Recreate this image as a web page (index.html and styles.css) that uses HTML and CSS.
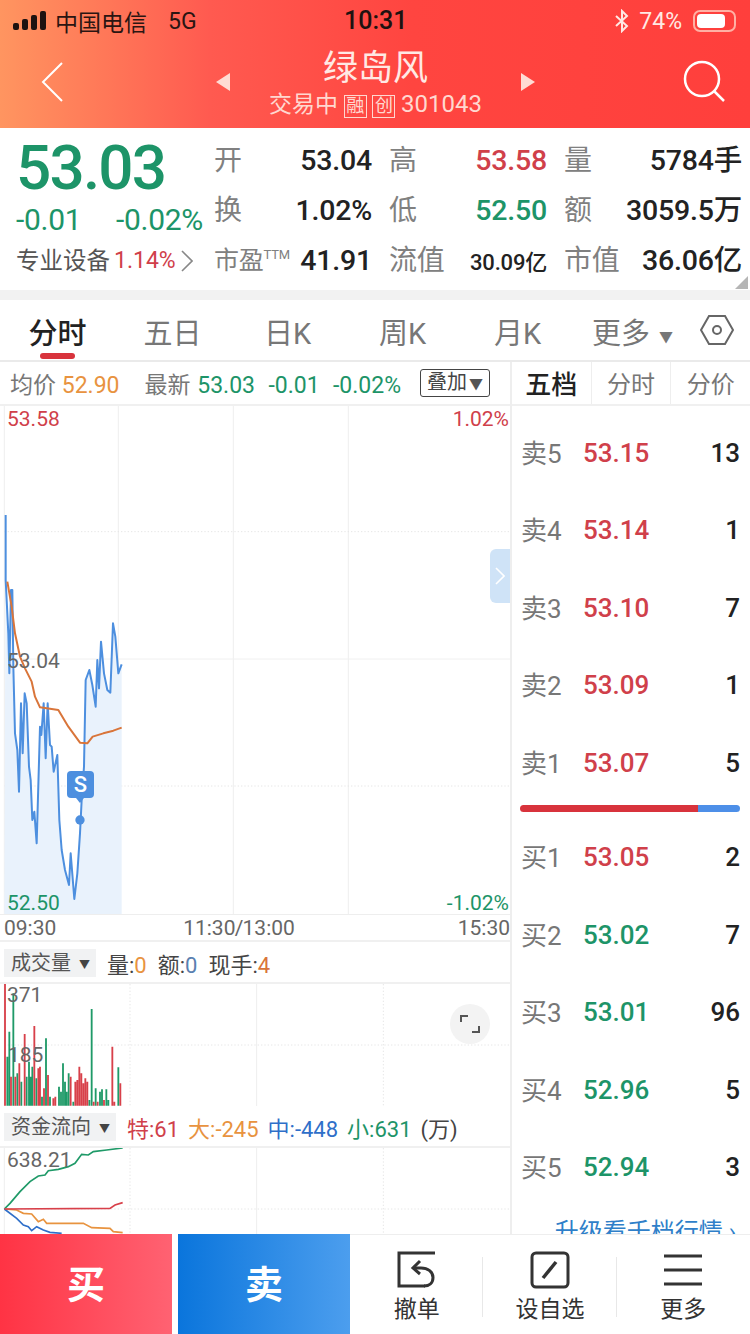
FILE: index.html
```html
<!DOCTYPE html>
<html lang="zh-CN">
<head>
    <meta charset="UTF-8">
    <title>绿岛风 301043</title>
    <link rel="stylesheet" href="styles.css">
</head>
<body>
<div class="screen">
    <!-- Header -->
    <header class="header">
        <div class="status">
            <div class="status-left">
                <svg class="signal" width="34" height="20" viewBox="0 0 34 20"><rect x="0" y="12" width="6" height="7" rx="2"/><rect x="9" y="8" width="6" height="11" rx="2"/><rect x="18" y="4" width="6" height="15" rx="2"/><rect x="27" y="0" width="6" height="19" rx="2"/></svg>
                <span class="carrier">中国电信</span>
                <span class="net">5G</span>
            </div>
            <div class="clock">10:31</div>
            <div class="status-right">
                <svg width="14" height="24" viewBox="0 0 14 24" fill="none" stroke="#ffe9e4" stroke-width="2"><path d="M1 7l11 10-5 5V2l5 5L1 17"/></svg>
                <span>74%</span>
                <span class="battery"><span class="battery-fill"></span></span>
            </div>
        </div>
        <div class="nav">
            <svg width="22" height="40" viewBox="0 0 22 40" fill="none" stroke="#fff" stroke-width="2"><path d="M21 1L2 20l19 19"/></svg>
            <div class="nav-title">
                <span class="arrow arrow-left"></span>
                <div class="name-box">
                    <div class="name">绿岛风</div>
                    <div class="sub">交易中 <span class="tag">融</span> <span class="tag">创</span> <span class="code">301043</span></div>
                </div>
                <span class="arrow arrow-right"></span>
            </div>
            <svg width="44" height="44" viewBox="0 0 44 44" fill="none" stroke="#fff" stroke-width="2.5"><circle cx="20" cy="19" r="17"/><path d="M32 31l10 10"/></svg>
        </div>
    </header>

    <!-- Quote -->
    <section class="quote">
        <div class="quote-left">
            <div class="price">53.03</div>
            <div class="change"><span>-0.01</span><span>-0.02%</span></div>
            <div class="device">专业设备<span class="device-val">1.14%</span>
                <svg width="12" height="22" viewBox="0 0 12 22" fill="none" stroke="#888" stroke-width="1.6"><path d="M1 1l10 10L1 21"/></svg>
            </div>
        </div>
        <div class="stats">
            <div class="stat"><span class="lbl">开</span><span>53.04</span></div>
            <div class="stat"><span class="lbl">高</span><span class="red">53.58</span></div>
            <div class="stat"><span class="lbl">量</span><span class="val-unit">5784手</span></div>
            <div class="stat"><span class="lbl">换</span><span>1.02%</span></div>
            <div class="stat"><span class="lbl">低</span><span class="green">52.50</span></div>
            <div class="stat"><span class="lbl">额</span><span class="val-unit">3059.5万</span></div>
            <div class="stat"><span class="lbl lbl-sm">市盈<sup>TTM</sup></span><span>41.91</span></div>
            <div class="stat"><span class="lbl">流值</span><span class="val-sm">30.09亿</span></div>
            <div class="stat"><span class="lbl">市值</span><span class="val-unit">36.06亿</span></div>
        </div>
        <div class="corner"></div>
    </section>

    <!-- Period tabs -->
    <div class="tabs">
        <div class="tab active">分时</div>
        <div class="tab">五日</div>
        <div class="tab">日K</div>
        <div class="tab">周K</div>
        <div class="tab">月K</div>
        <div class="tab">更多 <span class="tab-caret">▼</span></div>
        <svg class="tab-icon" width="34" height="32" viewBox="0 0 34 32" fill="none" stroke="#666" stroke-width="2"><path d="M9 2h16l8 14-8 14H9L1 16z"/><circle cx="17" cy="16" r="4"/></svg>
    </div>

    <main class="main">
        <div class="charts">
            <div class="infobar">
                <span class="gray">均价 <span class="orange">52.90</span></span>
                <span class="gray latest">最新 <span class="green">53.03&nbsp; -0.01&nbsp; -0.02%</span></span>
                <span class="overlay-btn">叠加<span class="overlay-caret">▼</span></span>
            </div>

            <!-- Price chart -->
            <div class="price-chart">
                <svg width="510" height="508" viewBox="0 -282 1530 1524" fill="none">
                    <path d="M13 -282V1242M700 -282V1242" stroke="#eee" stroke-width="3"/>
                    <path d="M355 -282V1242M1045 -282V1242" stroke="#eee" stroke-width="3"/>
                    <path d="M13 95H1530M13 858H1530" stroke="#e6e6e6" stroke-width="3" stroke-dasharray="4 6"/>
                    <path d="M13 477H1530" stroke="#f0f0f0" stroke-width="3"/>
                    <polygon fill="#e9f2fc" points="13,1242 17,45 17,240 25,400 28,520 33,270 37,270 40,500 45,700 52,750 57,875 63,610 68,760 74,580 80,610 87,800 92,840 97,960 103,935 110,1030 120,680 124,705 131,610 137,775 143,610 150,735 155,740 161,815 172,765 178,960 185,1050 195,1110 207,1155 212,1060 223,1197 232,1120 240,1000 245,900 252,800 257,540 268,510 277,555 287,620 292,480 297,565 303,425 312,520 322,570 331,578 339,370 346,410 355,520 365,493 365,1242"/>
                    <polyline stroke="#4d8fdf" stroke-width="6" stroke-linejoin="round" points="17,45 17,240 25,400 28,520 33,270 37,270 40,500 45,700 52,750 57,875 63,610 68,760 74,580 80,610 87,800 92,840 97,960 103,935 110,1030 120,680 124,705 131,610 137,775 143,610 150,735 155,740 161,815 172,765 178,960 185,1050 195,1110 207,1155 212,1060 223,1197 232,1120 240,1000 245,900 252,800 257,540 268,510 277,555 287,620 292,480 297,565 303,425 312,520 322,570 331,578 339,370 346,410 355,520 365,493"/>
                    <polyline stroke="#d9753a" stroke-width="6" stroke-linejoin="round" points="22,245 35,320 45,400 60,470 75,505 95,545 105,590 120,622 140,625 175,630 205,680 240,728 262,730 278,710 310,700 340,692 365,683"/>
                    <circle cx="240" cy="960" r="14" fill="#4d8fdf"/>
                </svg>
                <span class="axis-label tl">53.58</span>
                <span class="axis-label tr">1.02%</span>
                <span class="axis-label ml">53.04</span>
                <span class="axis-label bl">52.50</span>
                <span class="axis-label br">-1.02%</span>
                <span class="marker">S</span>
                <span class="side-tab">
                    <svg width="10" height="18" viewBox="0 0 10 18" fill="none" stroke="#fff" stroke-width="1.6"><path d="M1 1l8 8-8 8"/></svg>
                </span>
            </div>
            <div class="timeaxis"><span>09:30</span><span class="time-mid">11:30 / 13:00</span><span>15:30</span></div>

            <!-- Volume -->
            <div class="subhead">
                <span class="picker">成交量<span class="picker-caret">▼</span></span>
                <span class="gray-dark">量:<span class="orange">0</span></span>
                <span class="gray-dark">额:<span class="blue-gray">0</span></span>
                <span class="gray-dark">现手:<span class="orange-dark">4</span></span>
            </div>
            <div class="vol-chart">
                <svg width="510" height="122" viewBox="0 222 1530 366" fill="none">
                    <path d="M390 222V588M1150 222V588M13 405H1530" stroke="#e6e6e6" stroke-width="3" stroke-dasharray="4 6"/>
                    <path d="M770 222V588M13 222V588" stroke="#eee" stroke-width="3"/>
                    <path stroke="#1f9a68" stroke-width="5.5" d="M22 587V440M28 587V365M40 587V250M52 587V490M64 587V515M80 587V500M87 587V455M92 587V500M97 587V470M109 587V505M126 587V560M138 587V385M150 587V560M177 587V530M183 587V545M189 587V460M195 587V515M200 587V545M206 587V490M220 587V575M268 587V570M275 587V297M287 587V535M300 587V545M306 587V538M319 587V538M325 587V570M355 587V472"/>
                    <path stroke="#d8404a" stroke-width="5.5" d="M15 587V222M33 587V500M46 587V500M58 587V460M74 587V372M103 587V348M115 587V475M120 587V470M132 587V535M144 587V495M160 587V565M166 587V560M212 587V500M226 587V515M232 587V510M238 587V470M244 587V490M250 587V520M256 587V505M262 587V515M281 587V575M293 587V575M312 587V570M337 587V410M343 587V575M361 587V520"/>
                </svg>
                <span class="axis-label vol-top">371</span>
                <span class="axis-label vol-mid">185</span>
                <span class="expand">
                    <svg width="20" height="20" viewBox="0 0 20 20" fill="none" stroke="#555" stroke-width="2"><path d="M1 8V2h7M19 12v6h-7"/></svg>
                </span>
            </div>

            <!-- Capital flow -->
            <div class="subhead subhead-flow">
                <span class="picker picker-wide">资金流向<span class="picker-caret">▼</span></span>
                <span class="red">特:61</span>
                <span class="orange">大:-245</span>
                <span class="blue">中:-448</span>
                <span class="green">小:631</span>
                <span class="gray-dark">(万)</span>
            </div>
            <div class="flow-chart">
                <svg width="510" height="86" viewBox="0 714 1530 258" fill="none">
                    <path d="M390 714V972M1150 714V972M13 897H1530" stroke="#e6e6e6" stroke-width="3" stroke-dasharray="4 6"/>
                    <path d="M770 714V972M13 714V972" stroke="#eee" stroke-width="3"/>
                    <polyline stroke="#1f9a68" stroke-width="5" points="13,897 30,880 60,845 90,815 115,798 135,795 145,782 175,778 205,770 225,760 245,733 265,735 280,725 320,720 368,714"/>
                    <polyline stroke="#e8933f" stroke-width="5" points="13,897 50,900 70,910 95,912 115,935 130,928 140,940 250,940 275,953 330,955 340,965 368,968"/>
                    <polyline stroke="#2f6fc9" stroke-width="5" points="13,897 50,925 70,945 85,950 95,962 110,950 130,960 150,967 185,970"/>
                    <polyline stroke="#d8404a" stroke-width="5" points="13,897 330,895 345,885 368,878"/>
                </svg>
                <span class="axis-label flow-top">638.21</span>
            </div>
        </div>

        <!-- Order book -->
        <aside class="book">
            <div class="book-tabs">
                <div class="book-tab active">五档</div>
                <div class="book-tab">分时</div>
                <div class="book-tab">分价</div>
            </div>
            <div class="book-rows">
                <div class="row"><span class="row-lbl">卖5</span><span class="row-price red">53.15</span><span class="row-qty">13</span></div>
                <div class="row"><span class="row-lbl">卖4</span><span class="row-price red">53.14</span><span class="row-qty">1</span></div>
                <div class="row"><span class="row-lbl">卖3</span><span class="row-price red">53.10</span><span class="row-qty">7</span></div>
                <div class="row"><span class="row-lbl">卖2</span><span class="row-price red">53.09</span><span class="row-qty">1</span></div>
                <div class="row"><span class="row-lbl">卖1</span><span class="row-price red">53.07</span><span class="row-qty">5</span></div>
            </div>
            <div class="ratio"><div class="ratio-red"></div><div class="ratio-blue"></div></div>
            <div class="book-rows">
                <div class="row"><span class="row-lbl">买1</span><span class="row-price red">53.05</span><span class="row-qty">2</span></div>
                <div class="row"><span class="row-lbl">买2</span><span class="row-price green">53.02</span><span class="row-qty">7</span></div>
                <div class="row"><span class="row-lbl">买3</span><span class="row-price green">53.01</span><span class="row-qty">96</span></div>
                <div class="row"><span class="row-lbl">买4</span><span class="row-price green">52.96</span><span class="row-qty">5</span></div>
                <div class="row"><span class="row-lbl">买5</span><span class="row-price green">52.94</span><span class="row-qty">3</span></div>
            </div>
            <div class="upgrade">升级看千档行情 ›</div>
        </aside>
    </main>

    <!-- Bottom bar -->
    <footer class="footer">
        <div class="btn btn-buy">买</div>
        <div class="btn btn-sell">卖</div>
        <div class="actions">
            <div class="action">
                <svg width="40" height="38" viewBox="0 0 40 38" fill="none" stroke="#333" stroke-width="3"><path d="M38 2H2v33h26"/><path d="M18 17h6c7 0 12 4 12 9.5S32 35 27 35"/><path d="M23 10l-7 7 7 6"/></svg>
                <span>撤单</span>
            </div>
            <div class="action">
                <svg width="40" height="38" viewBox="0 0 40 38" fill="none" stroke="#333" stroke-width="3"><rect x="2" y="2" width="36" height="34" rx="4"/><path d="M13 27l13-16" stroke-width="3.5"/></svg>
                <span>设自选</span>
            </div>
            <div class="action">
                <svg width="40" height="38" viewBox="0 0 40 38" fill="none" stroke="#333" stroke-width="3"><path d="M1 5h38M1 19h38M1 33h38"/></svg>
                <span>更多</span>
            </div>
        </div>
    </footer>
</div>
</body>
</html>
```

FILE: styles.css
```css
/* Base */
* {
    margin: 0;
    padding: 0;
    box-sizing: border-box;
}

body {
    background-color: #fff;
    color: #222;
    font-family: Roboto, "Noto Sans CJK SC", sans-serif;
}

.screen {
    width: 750px;
    height: 1334px;
    display: flex;
    flex-direction: column;
    overflow: hidden;
}

.red { color: #d0404a; }
.green { color: #1d9468; }
.orange { color: #e8933f; }
.orange-dark { color: #d9753a; }
.blue { color: #2f6fc9; }
.blue-gray { color: #5a80b0; }
.gray { color: #777; }
.gray-dark { color: #444; }

/* Header */
.header {
    height: 128px;
    flex-shrink: 0;
    background: linear-gradient(90deg, #ff9560 0%, #ff5a50 28%, #ff4540 55%, #ff3f3c 100%);
}

.status {
    height: 42px;
    display: flex;
    align-items: center;
    justify-content: space-between;
    padding: 0 14px 0 13px;
    position: relative;
}

.status-left {
    display: flex;
    align-items: center;
    color: #2a1512;
    font-size: 23px;
}

.signal {
    fill: #1e1210;
    margin-right: 8px;
}

.net {
    margin-left: 21px;
    font-size: 23px;
}

.clock {
    position: absolute;
    left: 344px;
    top: 6px;
    font-size: 25px;
    font-weight: 500;
    color: #1e1210;
}

.status-right {
    display: flex;
    align-items: center;
    gap: 10px;
    color: #ffe9e4;
    font-size: 23px;
}

.battery {
    width: 43px;
    height: 22px;
    border: 2px solid #ffb0a4;
    border-radius: 7px;
    padding: 2px;
    margin-left: 1px;
}

.battery-fill {
    display: block;
    width: 28px;
    height: 14px;
    background-color: #fff;
    border-radius: 4px;
}

.nav {
    height: 86px;
    display: flex;
    align-items: center;
    justify-content: space-between;
    padding: 0 24px 6px 41px;
}

.nav-title {
    display: flex;
    align-items: center;
    gap: 30px;
    color: #fff;
    margin-left: 6px;
}

.arrow {
    width: 0;
    height: 0;
    border-top: 9px solid transparent;
    border-bottom: 9px solid transparent;
}

.arrow-left { border-right: 14px solid #ffdcd4; }
.arrow-right { border-left: 14px solid #ffdcd4; }

.name-box {
    width: 231px;
    text-align: center;
}

.name {
    font-size: 35px;
    line-height: 44px;
    color: #ffe9e4;
}

.sub {
    font-size: 23px;
    line-height: 26px;
    color: #ffd8d0;
    white-space: nowrap;
}

.tag {
    display: inline-block;
    width: 23px;
    height: 23px;
    font-size: 18px;
    line-height: 20px;
    border: 1px solid #ffd8d0;
    text-align: center;
}

.code {
    font-size: 24px;
}

/* Quote */
.quote {
    height: 162px;
    flex-shrink: 0;
    display: flex;
    padding: 7px 8px 0 0;
    position: relative;
}

.quote-left {
    width: 215px;
    padding-left: 16px;
    flex-shrink: 0;
}

.price {
    font-size: 62px;
    line-height: 66px;
    letter-spacing: -1.8px;
    font-weight: 500;
    color: #1d9468;
}

.change {
    display: flex;
    justify-content: space-between;
    font-size: 30px;
    line-height: 34px;
    margin-top: 2px;
    padding-right: 12px;
    letter-spacing: -0.3px;
    color: #1d9468;
}

.device {
    display: flex;
    align-items: center;
    font-size: 23.5px;
    line-height: 40px;
    margin-top: 4px;
    color: #555;
    white-space: nowrap;
}

.device-val {
    font-size: 23px;
    color: #d0404a;
    margin: 0 5px 0 4px;
}

.stats {
    flex: 1;
    display: grid;
    grid-template-columns: 157px 157px 177px;
    grid-auto-rows: 50px;
    column-gap: 18px;
}

.stat {
    display: flex;
    align-items: center;
    justify-content: space-between;
    font-size: 28.5px;
    font-weight: 500;
    color: #222;
    white-space: nowrap;
    letter-spacing: -0.2px;
}

.lbl {
    font-size: 28px;
    font-weight: 400;
    color: #808080;
    margin: -4px 0 0 -1px;
}

.lbl-sm {
    font-size: 25px;
}

.lbl sup {
    font-size: 13px;
    vertical-align: 10px;
    line-height: 0;
}

.val-sm {
    font-size: 22px;
}

.val-unit {
    margin-top: -5px;
}

.corner {
    position: absolute;
    right: 2px;
    bottom: 1px;
    width: 0;
    height: 0;
    border-left: 13px solid transparent;
    border-bottom: 13px solid #b5b5b5;
}

/* Tabs */
.tabs {
    height: 72px;
    flex-shrink: 0;
    display: flex;
    align-items: center;
    border-top: 10px solid #f2f2f2;
    border-bottom: 2px solid #eaeaea;
    color: #777;
    font-size: 29px;
}

.tab {
    width: 115px;
    height: 60px;
    padding-top: 4px;
    line-height: 60px;
    text-align: center;
    position: relative;
    white-space: nowrap;
}

.tab.active {
    color: #222;
    font-weight: 500;
}

.tab.active::after {
    content: '';
    position: absolute;
    left: 40px;
    bottom: 1px;
    width: 35px;
    height: 6px;
    border-radius: 3px;
    background-color: #d8333c;
}

.tab-caret {
    font-size: 14px;
    vertical-align: 2px;
    margin-left: 2px;
}

.tab-icon {
    margin-left: 10px;
}

/* Main area */
.main {
    flex: 1;
    min-height: 0;
    display: flex;
    overflow: hidden;
}

.charts {
    width: 510px;
    flex-shrink: 0;
}

.infobar {
    height: 44px;
    display: flex;
    align-items: center;
    padding: 0 20px 0 10px;
    border-bottom: 2px solid #f0f0f0;
    font-size: 23px;
    white-space: nowrap;
}

.latest {
    margin-left: 25px;
    word-spacing: 1px;
}

.overlay-btn {
    margin-left: auto;
    width: 70px;
    height: 28px;
    line-height: 25px;
    border: 1.5px solid #444;
    border-radius: 3px;
    font-size: 20px;
    color: #444;
    text-align: center;
}

.overlay-caret {
    font-size: 14px;
    margin-left: 2px;
    color: #555;
}

.price-chart {
    height: 508px;
    position: relative;
}

.price-chart svg,
.vol-chart svg,
.flow-chart svg {
    display: block;
}

.axis-label {
    position: absolute;
    font-size: 21px;
    line-height: 24px;
    color: #666;
}

.axis-label.tl { left: 7px; top: 1px; color: #d0404a; }
.axis-label.tr { right: 1px; top: 1px; color: #d0404a; }
.axis-label.ml { left: 7px; top: 243px; }
.axis-label.bl { left: 7px; bottom: -1px; color: #1d9468; }
.axis-label.br { right: 1px; bottom: -1px; color: #1d9468; }

.marker {
    position: absolute;
    left: 67px;
    top: 365px;
    width: 27px;
    height: 27px;
    border-radius: 4px;
    background-color: #4d8fdf;
    color: #fff;
    font-size: 22px;
    font-weight: 500;
    line-height: 27px;
    text-align: center;
}

.marker::after {
    content: '';
    position: absolute;
    left: 9px;
    top: 27px;
    border-left: 4px solid transparent;
    border-right: 4px solid transparent;
    border-top: 5px solid #4d8fdf;
}

.side-tab {
    position: absolute;
    right: 0;
    top: 143px;
    width: 20px;
    height: 54px;
    background-color: #cfe3f7;
    border-radius: 6px 0 0 6px;
    display: flex;
    align-items: center;
    justify-content: center;
}

.timeaxis {
    height: 28px;
    display: flex;
    justify-content: space-between;
    align-items: center;
    padding: 0 0 0 4px;
    border-top: 1px solid #eee;
    border-bottom: 2px solid #f0f0f0;
    font-size: 21px;
    color: #666;
    white-space: nowrap;
}

.time-mid {
    word-spacing: -6px;
    margin-right: 36px;
}

.subhead {
    height: 42px;
    display: flex;
    align-items: center;
    gap: 11px;
    padding: 1px 0 0 4px;
    border-bottom: 2px solid #f0f0f0;
    font-size: 22px;
    white-space: nowrap;
}

.subhead-flow {
    gap: 9px;
}

.subhead-flow .red {
    margin-left: 2px;
}

.picker {
    width: 92px;
    height: 28px;
    line-height: 28px;
    padding-left: 7px;
    background-color: #f1f2f3;
    color: #555;
    font-size: 20px;
}

.picker-wide {
    width: 112px;
}

.picker-caret {
    font-size: 11px;
    margin-left: 8px;
    color: #444;
    vertical-align: 1px;
}

.vol-chart {
    height: 122px;
    position: relative;
}

.axis-label.vol-top { left: 7px; top: -1px; }
.axis-label.vol-mid { left: 8px; top: 59px; }

.expand {
    position: absolute;
    left: 450px;
    top: 20px;
    width: 40px;
    height: 40px;
    border-radius: 50%;
    background-color: #f3f3f3;
    display: flex;
    align-items: center;
    justify-content: center;
}

.flow-chart {
    height: 86px;
    position: relative;
}

.axis-label.flow-top { left: 7px; top: 0; }

/* Order book */
.book {
    flex: 1;
    border-left: 2px solid #eee;
}

.book-tabs {
    height: 44px;
    display: flex;
    border-bottom: 2px solid #f0f0f0;
}

.book-tab {
    flex: 1;
    line-height: 46px;
    text-align: center;
    font-size: 24px;
    color: #777;
    border-left: 1px solid #eee;
}

.book-tab.active {
    color: #222;
    font-size: 26px;
    font-weight: 500;
    border-left: 0;
}

.book-rows {
    padding: 0 10px 0 9px;
}

.book-tabs + .book-rows {
    padding-top: 8px;
}

.row {
    height: 77.5px;
    display: flex;
    align-items: center;
    font-size: 26px;
}

.row-lbl {
    width: 62px;
    color: #777;
    margin-top: -3px;
}

.row-price {
    font-weight: 500;
}

.row-qty {
    margin-left: auto;
    font-weight: 500;
    color: #222;
}

.ratio {
    height: 7px;
    margin: 3px 10px 7px 8px;
    display: flex;
    border-radius: 4px;
    overflow: hidden;
}

.ratio-red {
    width: 81%;
    background-color: #d8333c;
}

.ratio-blue {
    flex: 1;
    background-color: #4d8fe8;
}

.upgrade {
    margin-top: 6px;
    text-align: right;
    padding-right: 14px;
    font-size: 24px;
    color: #2f7fc9;
    white-space: nowrap;
}

/* Footer */
.footer {
    height: 100px;
    flex-shrink: 0;
    display: flex;
}

.btn {
    width: 172px;
    line-height: 102px;
    text-align: center;
    font-size: 38px;
    font-weight: 700;
    color: #fff;
}

.btn-buy {
    background: linear-gradient(90deg, #ff3344, #ff6272);
    margin-right: 6px;
}

.btn-sell {
    background: linear-gradient(90deg, #0a75dc, #4c9eee);
}

.actions {
    flex: 1;
    display: flex;
    border-top: 1px solid #eee;
    padding-top: 16px;
}

.action {
    flex: 1;
    display: flex;
    flex-direction: column;
    align-items: center;
    font-size: 23px;
    line-height: 32px;
    color: #333;
    position: relative;
}

.action span {
    margin-top: 5px;
}

.action + .action::before {
    content: '';
    position: absolute;
    left: -1px;
    top: 6px;
    width: 1px;
    height: 60px;
    background-color: #e8e8e8;
}
```
